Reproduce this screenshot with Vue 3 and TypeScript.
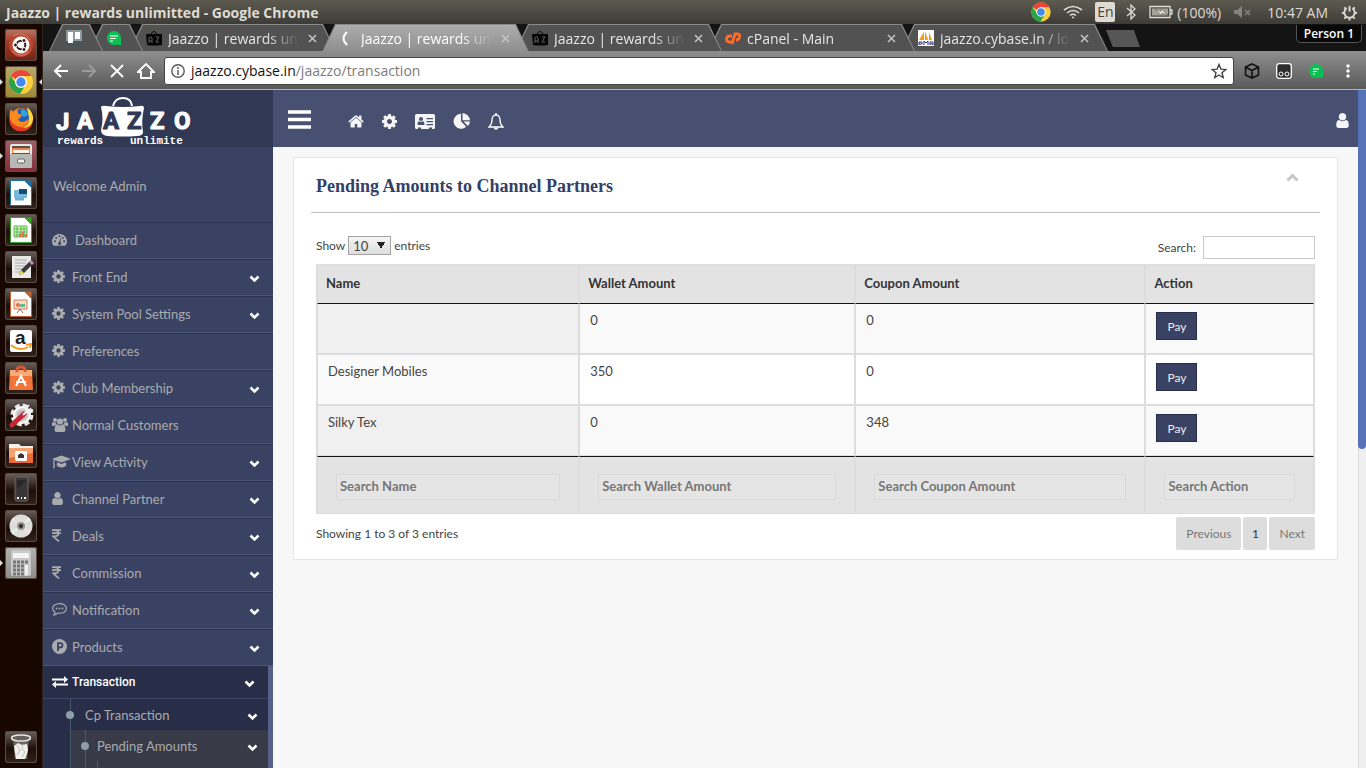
<script setup lang="ts">
import { ref, computed } from 'vue'

interface Tab { title: string; icon: string; pinned?: boolean; active?: boolean }
interface NavItem { label: string; icon: string; open?: boolean; wide?: boolean }
interface Partner { name: string; wallet: number; coupon: number }

const tabs: Tab[] = [
  { title: '', icon: 'board', pinned: true },
  { title: '', icon: 'chat', pinned: true },
  { title: 'Jaazzo | rewards unlimitted', icon: 'bag' },
  { title: 'Jaazzo | rewards unlimitted', icon: 'spin', active: true },
  { title: 'Jaazzo | rewards unlimitted', icon: 'bag' },
  { title: 'cPanel - Main', icon: 'cp' },
  { title: 'jaazzo.cybase.in / localhost', icon: 'pma' }
]

const nav: NavItem[] = [
  { label: 'Dashboard', icon: 'gauge', wide: true },
  { label: 'Front End', icon: 'cog', open: true },
  { label: 'System Pool Settings', icon: 'cog', open: true },
  { label: 'Preferences', icon: 'cog' },
  { label: 'Club Membership', icon: 'cog', open: true },
  { label: 'Normal Customers', icon: 'group' },
  { label: 'View Activity', icon: 'cap', open: true },
  { label: 'Channel Partner', icon: 'user', open: true },
  { label: 'Deals', icon: 'rupee', open: true },
  { label: 'Commission', icon: 'rupee', open: true },
  { label: 'Notification', icon: 'comment', open: true },
  { label: 'Products', icon: 'product', open: true }
]

const launchers = ['Ubuntu', 'Chrome', 'Firefox', 'Files', 'Writer', 'Calc', 'Editor', 'Impress', 'Amazon', 'Software', 'Settings', 'Pictures', 'Phone', 'Disc', 'Calculator', 'Trash']

const columns = ['Name', 'Wallet Amount', 'Coupon Amount', 'Action']
const partners: Partner[] = [
  { name: '', wallet: 0, coupon: 0 },
  { name: 'Designer Mobiles', wallet: 350, coupon: 0 },
  { name: 'Silky Tex', wallet: 0, coupon: 348 }
]
const query = ref('')
const size = ref('10')
const filters = ref(['', '', '', ''])
const rows = computed(() => partners.filter(p => {
  const cells = [p.name, String(p.wallet), String(p.coupon), 'Pay']
  const q = query.value.toLowerCase()
  return cells.some(c => c.toLowerCase().includes(q)) &&
    cells.every((c, i) => c.toLowerCase().includes(filters.value[i].toLowerCase()))
}))

const cog = 'M1152 896q0-106-75-181t-181-75-181 75-75 181 75 181 181 75 181-75 75-181zm512-109v222q0 12-8 23t-20 13l-185 28q-19 54-39 91 35 50 107 138 10 12 10 25t-9 23q-27 37-99 108t-94 71q-12 0-26-9l-138-108q-44 23-91 38-16 136-29 186-7 28-36 28h-222q-14 0-24.5-8.5t-11.5-21.5l-28-184q-49-16-90-37l-141 107q-10 9-25 9-14 0-25-11-126-114-165-168-7-10-7-23 0-12 8-23 15-21 51-66.5t54-70.5q-27-50-41-99l-183-27q-13-2-21-12.5t-8-23.5v-222q0-12 8-23t19-13l186-28q14-46 39-92-40-57-107-138-10-12-10-24 0-10 9-23 26-36 98.5-107.5t94.5-71.5q13 0 26 10l138 107q44-23 91-38 16-136 29-186 7-28 36-28h222q14 0 24.5 8.500t11.5 21.5l28 184q49 16 90 37l142-107q9-9 24-9 13 0 25 10 129 119 165 170 7 8 7 22 0 12-8 23-15 21-51 66.5t-54 70.5q26 50 41 98l183 28q13 2 21 12.5t8 23.5z'
const home = 'M1472 992v480q0 26-19 45t-45 19h-384v-384h-256v384h-384q-26 0-45-19t-19-45v-480q0-1 .5-3t.5-3l575-474 575 474q1 2 1 6zm223-69l-62 74q-8 9-21 11h-3q-13 0-21-7l-692-577-692 577q-12 8-24 7-13-2-21-11l-62-74q-8-10-7-23.5t11-21.5l719-599q32-26 76-26t76 26l244 204v-195q0-14 9-23t23-9h192q14 0 23 9t9 23v408l219 182q10 8 11 21.5t-7 23.5z'
const user = 'M1536 1399q0 109-62.5 187t-150.5 78h-854q-88 0-150.5-78t-62.5-187q0-85 8.5-160.5t31.5-152 58.5-131 94-89 134.5-34.5q131 128 313 128t313-128q76 0 134.5 34.5t94 89 58.5 131 31.5 152 8.5 160.5zm-256-887q0 159-112.5 271.5t-271.5 112.5-271.5-112.5-112.5-271.5 112.5-271.5 271.5-112.5 271.5 112.5 112.5 271.5z'
</script>

<template>
  <div class="desktop">
    <header class="panel">
      <span class="window-title">Jaazzo | rewards unlimitted - Google Chrome</span>
      <div class="tray">
        <svg class="t-chrome" viewBox="0 0 32 32" width="20" height="20"><circle cx="16" cy="16" r="15.500" fill="#fdd03b" /><path d="M16 16 2.600 8.200A15.500 15.500 0 0 1 29.500 8.500H16z" fill="#e8453c" /><path d="M2.600 8.200A15.500 15.500 0 0 0 15 31.500L22 20l-12-1z" fill="#2ba24c" /><circle cx="16" cy="16" r="7.500" fill="#fff" /><circle cx="16" cy="16" r="6" fill="#4688f1" /></svg>
        <svg class="t-wifi" viewBox="0 0 20 14" width="20" height="14" fill="none" stroke="#dfdbd2" stroke-width="1.600"><path d="M1 5q9-7 18 0M4 8q6-5 12 0M7 10.500q3-2.500 6 0" /><circle cx="10" cy="12.500" r="1" fill="#dfdbd2" stroke="none" /></svg>
        <span class="lang">En</span>
        <svg class="t-bt" viewBox="0 0 10 16" width="10" height="16" fill="none" stroke="#dfdbd2" stroke-width="1.300"><path d="m1 4 8 7-4 4V1l4 4-8 7" /></svg>
        <svg class="t-batt" viewBox="0 0 24 14" width="24" height="14"><path d="M1 1.500h20v11H1zM21 5h2v4h-2" fill="none" stroke="#dfdbd2" stroke-width="1.300" /><path d="M3 3.500h16v7H3z" fill="#a5a299" /><path d="m6 4 6 2.500V4l7 6-6-2v2.500z" fill="#f3f0e8" stroke="#4a4842" stroke-width=".5" /></svg>
        <span class="pct">(100%)</span>
        <svg class="t-mute" viewBox="0 0 18 12" width="18" height="12"><path d="M0 4h3l5-4v12L3 8H0z" fill="#86837a" /><path d="m11 4 5 5m0-5-5 5" stroke="#86837a" stroke-width="1.500" /></svg>
        <span class="clock">10:47 AM</span>
        <svg class="t-power" viewBox="0 0 18 18" width="17" height="17" fill="none" stroke="#dfdbd2"><path d="M6 4.500a5.500 5.500 0 1 0 6 0" stroke-width="2" /><path d="M9 2v6" stroke-width="2" /><path d="M3.500 3.500 5 5m9.500-1.500L13 5M1 9.500h2m12 0h2M3.500 15.500 5 14m9.500 1.500L13 14M9 15v2.500" stroke-width="2" /></svg>
      </div>
    </header>

    <div class="workspace">
      <nav class="launcher" aria-label="Launcher">
        <button v-for="name in launchers" :key="name" :aria-label="name" :class="['tile', name.toLowerCase()]">
          <svg v-if="name === 'Ubuntu'" viewBox="0 0 32 32"><circle cx="16" cy="16" r="12" fill="#bc4630" /><path d="M8 7Q18 1 25 11M7 22q9 8 17 1" stroke="#d98674" fill="none" /><circle cx="16" cy="16" r="8.500" fill="#fff" /><circle cx="16" cy="16" r="4.300" stroke="#3a1c18" stroke-width="2" fill="none" /><g fill="#3a1c18" stroke="#fff"><circle cx="10.500" cy="16" r="2" /><circle cx="19" cy="11.500" r="2" /><circle cx="19" cy="20.500" r="2" /></g></svg>
          <svg v-else-if="name === 'Chrome'" viewBox="0 0 32 32"><circle cx="16" cy="16" r="12" fill="#fdd03b" /><path d="M16 16 5.600 10A12 12 0 0 1 26.500 10H16z" fill="#e8453c" /><path d="M5.600 10A12 12 0 0 0 15 28l5.500-9-9-1z" fill="#2ba24c" /><circle cx="16" cy="16" r="6" fill="#fff" /><circle cx="16" cy="16" r="4.700" fill="#4688f1" /></svg>
          <svg v-else-if="name === 'Firefox'" viewBox="0 0 32 32"><circle cx="16" cy="16.500" r="11.500" fill="#f4762a" /><circle cx="17" cy="13" r="7.500" fill="#1f5fb4" /><path d="M17 6q5 1 6 6l-4 2q-5-3-2-8z" fill="#35a3dd" /><path d="M6 6q1 3 3 3l4-2q-1 3 1 4l3 1q-1 3-4 4 1 3 5 3 4-1 5-4 0 6-6 8-7 1-11-5-3-6 0-12z" fill="#fb8b1e" /><path d="M4.500 15q0 13 11.500 13.200Q27 28 28 17q-4 8-12 7.500Q7 23 4.500 15z" fill="#e33a26" /><path d="M22 4q7 6 6 13-2 8-10 8 7-3 6-10-1-6-2-11z" fill="#ffd83a" /></svg>
          <svg v-else-if="name === 'Files'" viewBox="0 0 32 32"><rect x="5" y="4" width="22" height="24" rx="2" fill="#e6e6e4" /><path d="M7 6h18v8H7z" fill="#59514b" /><path d="M7 8h18v5H7z" fill="#f08145" /><path d="M8 10h16v3H8z" fill="#fff4e7" /><path d="M5 14h22v12q0 2-2 2H7q-2 0-2-2z" fill="#b8b8b5" /><rect x="12.500" y="19" width="7" height="4" rx="1" fill="#eee" stroke="#666" /></svg>
          <svg v-else-if="name === 'Writer' || name === 'Calc' || name === 'Impress'" viewBox="0 0 32 32" :class="'doc ' + name.toLowerCase() + '-doc'"><path d="M5.500 3.500h14l7 7V28.500h-21z" fill="#fff" stroke="currentColor" /><path d="M19.500 3.500h7v7z" fill="currentColor" /><g v-if="name === 'Writer'"><path d="M9 13h13v8H9z" fill="#75bbdf" /><path d="M14 12h8v5h-8z" fill="#174d6e" /><path d="M10 22h9" stroke="#6bafd4" stroke-width="3" /></g><g v-else-if="name === 'Calc'"><path d="M9 12h13v11H9zM9 15h13M9 18h13M9 21h13M12 12v11M16 12v11M19 12v11" fill="#d8f6ca" stroke="#45a832" stroke-width=".8" /><path d="M15 23v-4m3 4v-5m3 5v-3" stroke="#e75d41" stroke-width="1.500" /></g><g v-else><path d="M9 12h13v9H9z" fill="#fbdccb" stroke="#d87b54" /><path d="M15 16h5v3h-5z" fill="#6cb895" /><circle cx="13" cy="17" r="2" fill="#e96d43" /><path d="m12 25 3-4 3 4" fill="none" stroke="#a75b3d" /></g></svg>
          <svg v-else-if="name === 'Editor'" viewBox="0 0 32 32"><path d="M7 5h19v22H7z" fill="#e9e9e7" /><path d="M10 9h12M10 12h11M10 15h12M10 18h8M10 21h7" stroke="#a9a9a7" /><path d="m14 24 2-5 9-9 3 3-9 9z" fill="#3a3a3b" /><path d="m14 24 2-5 3 3z" fill="#f0d84e" /><path d="m24 11 2-2 3 3-2 2z" fill="#c989b8" /></svg>
          <svg v-else-if="name === 'Amazon'" viewBox="0 0 32 32"><rect x="5" y="5" width="22" height="22" rx="2" fill="#fff" /><text x="10" y="19" font-family="Liberation Sans, sans-serif" font-weight="700" font-size="19" fill="#202020">a</text><path d="M6 20q9 7 17 2M21 20l5-1-1 4" stroke="#f49b1f" fill="none" stroke-width="2" /></svg>
          <svg v-else-if="name === 'Software'" viewBox="0 0 32 32"><path d="M5 8h22l1 20H4z" fill="#f17438" /><path d="M5 8h22v6H5z" fill="#f7ab75" /><path d="M12 10q-1-5 4-5t4 5" fill="none" stroke="#d95633" stroke-width="3" /><path d="m11 24 5-10 5 10M11 20h10" stroke="#fff" stroke-width="2" fill="none" /></svg>
          <svg v-else-if="name === 'Settings'" viewBox="0 0 32 32"><circle cx="17" cy="16" r="10" fill="none" stroke="#e5e5e5" stroke-width="3" stroke-dasharray="5 2.900" /><circle cx="17" cy="16" r="8" fill="#d6d6d6" stroke="#fff" stroke-width="2" /><circle cx="17" cy="16" r="5" fill="#bbb" /><path d="m7 26 12-11" stroke="#c82632" stroke-width="5" stroke-linecap="round" /><path d="m18 16 6-6m0-4-3 4 2 3 5-2" stroke="#f2f2f2" stroke-width="2" fill="none" /></svg>
          <svg v-else-if="name === 'Pictures'" viewBox="0 0 32 32"><path d="M4 8h10l2 2h12v8H4z" fill="#f6eee8" /><path d="M4 12h24v15H4z" fill="#ec6a34" /><path d="M4 12h24v5L4 22z" fill="#f3a26f" /><rect x="10" y="15" width="12" height="10" rx="1.500" fill="#fff" /><path d="M13 22v-3l3-2 3 2v3z" fill="#3c3431" /></svg>
          <svg v-else-if="name === 'Phone'" viewBox="0 0 32 32"><rect x="10" y="4" width="13" height="24" rx="2" fill="#3b3938" stroke="#6b6866" /><path d="M12 7h9v15h-9z" fill="#292726" /><path d="M12 16 21 8v14h-9z" fill="#383634" /><path d="M12 25h2m2 0h1m2 0h2" stroke="#fff" stroke-width="2" /></svg>
          <svg v-else-if="name === 'Disc'" viewBox="0 0 32 32"><circle cx="16" cy="16" r="11.500" fill="#deddda" /><path d="M16 16 6 11l2-3zM16 16l10 5-3 4z" fill="#eddee9" /><path d="m16 16 7-9 3 3zM16 16 8 25l-3-4z" fill="#e3eee5" /><circle cx="16" cy="16" r="4" fill="#98938e" /><circle cx="16" cy="16" r="2" fill="#302a27" /></svg>
          <svg v-else-if="name === 'Calculator'" viewBox="0 0 32 32"><rect x="6" y="3" width="20" height="26" rx="2" fill="#c9c9c9" /><path d="M8 6h16v5H8z" fill="#f5f5ef" /><path d="M8 15h3m1 0h3m1 0h3M8 19h3m1 0h3m1 0h3M8 23h3m1 0h3m1 0h3M8 27h3m1 0h3m1 0h3M20 15h3" stroke="#777" stroke-width="3" /><path d="M20 18h3v10h-3z" fill="#eee" /></svg>
          <svg v-else viewBox="0 0 32 32"><path d="m8 7 2 21h12l2-21z" fill="#6f6763" /><ellipse cx="16" cy="7" rx="9.500" ry="3" fill="#655f5d" stroke="#e8e7e5" stroke-width="1.500" /><path d="m9 15 4-3 4 2 5-1 1 6-1 4-2 5H11l-1-6z" fill="#f0efed" /><path d="m12 14 3 5-3 5m6-11-1 5 3 3-3 5" stroke="#c4c0bc" fill="none" /></svg>
        </button>
      </nav>

      <div class="browser">
        <div class="tabstrip">
          <div v-for="(tab, i) in tabs" :key="i" class="tab" :class="{ pinned: tab.pinned, active: tab.active }" :style="{ zIndex: tab.active ? 20 : 10 - i }">
            <svg viewBox="0 0 16 16" width="16" height="16" class="favicon">
              <g v-if="tab.icon === 'board'"><path d="M0 0h16v16H0z" fill="#8d9a9f" /><path d="M0 11h16v5H0z" fill="#46555b" /><path d="M2 2h5v11H2zm7 0h5v7H9z" fill="#fff" /></g>
              <g v-else-if="tab.icon === 'chat'"><path d="M8 1a7 7 0 1 0 2 13.700L15 15v-7A7 7 0 0 0 8 1z" fill="#0bbf53" /><path d="M4 6h8M4 8.500h6M4 11h3" stroke="#fff" /></g>
              <g v-else-if="tab.icon === 'bag'"><path d="M0 4h16v11q-8 1-15 0z" fill="#050505" /><path d="M5 4q3-5 6 0" fill="none" stroke="#050505" /><path d="M3 13V8q2-3 3 0v5M3 11h3M10 7h3l-3 5h3" fill="none" stroke="#626262" /></g>
              <path v-else-if="tab.icon === 'spin'" d="M8 2Q1 8 8 15" fill="none" stroke="#fff" stroke-width="2" />
              <g v-else-if="tab.icon === 'cp'" fill="none" stroke="#ff6c2c" stroke-width="2.800"><path d="M7 6H4.500Q1.500 6 1.500 9t3 3H6" /><path d="m7 14 3-10h3q2 0 1.500 3T11 10" /></g>
              <g v-else><path d="M0 0h16v16H0z" fill="#fff" /><path d="M1 10 6 2v8zm6 0V1l3 9zm4 0V2l3 8z" fill="#f89c0e" /><path d="M1 15v-3h3v2H1m5 1v-4l2 2 2-2v4m2 0v-3h3v3m-3-1h3" fill="none" stroke="#313175" /></g>
            </svg>
            <span v-if="!tab.pinned" class="tab-title">{{ tab.title }}</span>
            <button v-if="!tab.pinned" class="tab-close" aria-label="Close tab"><svg viewBox="0 0 9 9" width="9" height="9"><path d="m1 1 7 7m0-7-7 7" stroke="#c4c4c4" stroke-width="1.500" /></svg></button>
          </div>
          <button class="new-tab" aria-label="New tab"></button>
          <button class="person">Person 1</button>
        </div>

        <div class="toolbar">
          <button aria-label="Back"><svg viewBox="0 0 16 16" width="16" height="16"><path d="M15 8H2m6-6L2 8l6 6" fill="none" stroke="#fff" stroke-width="2" /></svg></button>
          <button aria-label="Forward"><svg viewBox="0 0 16 16" width="16" height="16"><path d="M1 8h13M8 2l6 6-6 6" fill="none" stroke="#9b9b9b" stroke-width="2" /></svg></button>
          <button aria-label="Stop"><svg viewBox="0 0 16 16" width="16" height="16"><path d="m2 2 12 12m0-12L2 14" stroke="#fff" stroke-width="1.800" /></svg></button>
          <button aria-label="Home"><svg viewBox="0 0 18 16" width="18" height="16"><path d="M1 9 9 1l8 8h-3v6H4V9z" fill="none" stroke="#fff" stroke-width="1.800" /></svg></button>
          <div class="omnibox">
            <svg viewBox="0 0 14 14" width="14" height="14"><circle cx="7" cy="7" r="6.200" fill="none" stroke="#5a5a5a" stroke-width="1.400" /><path d="M7 6v5M7 3v2" stroke="#5a5a5a" stroke-width="1.500" /></svg>
            <span class="url">jaazzo.cybase.in<i>/jaazzo/transaction</i></span>
            <svg viewBox="0 0 16 16" width="16" height="16"><path d="m8 1.500 1.900 4.600 4.900.4-3.800 3.200 1.200 4.900L8 12l-4.200 2.600L5 9.700 1.200 6.500l4.900-.4z" fill="none" stroke="#444" stroke-width="1.400" /></svg>
          </div>
          <div class="extensions">
            <svg viewBox="0 0 16 16" width="16" height="16"><path d="m8 1 6.500 3v8L8 15l-6.500-3V4zM1.500 4 8 7.500 14.500 4M8 7.500V15" fill="none" stroke="#111" stroke-width="1.600" /></svg>
            <svg viewBox="0 0 16 16" width="16" height="16"><rect x=".7" y=".7" width="14.600" height="14.600" rx="2.500" fill="#2c2c2c" stroke="#fff" stroke-width="1.300" /><circle cx="5" cy="11" r="2" fill="none" stroke="#fff" /><circle cx="11" cy="11" r="2" fill="none" stroke="#fff" /></svg>
            <svg viewBox="0 0 16 16" width="16" height="16"><path d="M8 1a7 7 0 1 0 2 13.700L15 14V8A7 7 0 0 0 8 1z" fill="#0bbf53" /><path d="M5 6h6M5 8.500h4M5 11h2" stroke="#fff" /></svg>
            <svg viewBox="0 0 16 16" width="16" height="16" fill="#fff"><circle cx="8" cy="3" r="1.700" /><circle cx="8" cy="8" r="1.700" /><circle cx="8" cy="13" r="1.700" /></svg>
          </div>
        </div>

        <div class="page">
          <aside class="sidebar">
            <div class="brand">
              <svg viewBox="0 0 230 57" width="230" height="57" role="img" aria-label="Jaazzo">
                <path d="M70 16Q72 8 80 8t9 8" fill="none" stroke="#fff" stroke-width="2" />
                <path d="M58 17q1-2 5-1 18 2 34 0 4-1 4 2-3 13-1 24 0 4-6 4-14 1-30 0-6-1-6-6 3-11 0-23z" fill="#fff" />
                <g font-family="Roboto, sans-serif" font-weight="700" font-size="24" fill="#fff" stroke="#fff" stroke-linejoin="round">
                  <text x="13" y="40">J</text><text x="34" y="39">A</text><text x="60" y="39" fill="#303854" stroke="#303854">A</text><text x="84" y="39" fill="#303854" stroke="#303854">Z</text><text x="107" y="39">Z</text><text x="131" y="39">O</text>
                </g>
                <g font-family="Liberation Mono, monospace" font-weight="700" font-size="11" fill="#fff"><text x="14" y="54">rewards</text><text x="87" y="54">unlimite</text></g>
              </svg>
            </div>
            <div class="welcome">Welcome Admin</div>
            <a v-for="item in nav" :key="item.label" href="#" class="nav-item">
              <span class="nav-icon" :class="{ wide: item.wide }">
                <svg v-if="item.icon === 'cog'" viewBox="128 128 1536 1536" width="13" height="13"><path :d="cog" /></svg>
                <svg v-else-if="item.icon === 'gauge'" viewBox="0 0 16 14" width="15" height="13"><path d="M8 1a8 8 0 0 0-6.700 12.300q.3.400.8.400h11.800q.5 0 .8-.4A8 8 0 0 0 8 1z" /><g fill="#3a4263"><circle cx="3" cy="9" r="1.100" /><circle cx="4.500" cy="5.300" r="1.100" /><circle cx="8" cy="3.600" r="1.100" /><circle cx="11.500" cy="5.300" r="1.100" /><circle cx="13" cy="9" r="1.100" /><path d="m8.700 6 .8.200L9 10a1.600 1.600 0 1 1-1.300-.2z" /></g></svg>
                <svg v-else-if="item.icon === 'group'" viewBox="0 0 16 15" width="16" height="15"><circle cx="3" cy="3" r="2" /><circle cx="13" cy="3" r="2" /><circle cx="8" cy="4.500" r="3.100" /><path d="M0 9V7q0-2 1-2 2 1 3 .5Q4 7 5 8q-2 0-3 1zM16 9V7q0-2-1-2-2 1-3 .5 0 1.500-1 2.500 2 0 3 1zM2.500 13q0-5 3-5.500 2.500 2 5 0 3 .5 3 5.500 0 2-2 2h-7q-2 0-2-2z" /></svg>
                <svg v-else-if="item.icon === 'cap'" viewBox="0 0 19 14" width="19" height="14"><path d="M9.500.5 19 4 9.500 7.500 3 5.200q-.8 1-.8 3l.7 1-.5 4H1l.5-4-.5-1q.1-2 .8-3.500L0 4zM5 7.300l4.500 1.600L14 7.300l.3 3Q13 12.500 9.500 12.500t-4.800-2.200z" /></svg>
                <svg v-else-if="item.icon === 'user'" viewBox="256 128 1280 1536" width="11" height="13"><path :d="user" /></svg>
                <svg v-else-if="item.icon === 'rupee'" viewBox="0 0 9 13" width="9" height="13"><path d="M0 1.200h9M0 4.200h9M2 1.200q4.500 0 4.500 3T2 7.300H1L7 12.500" fill="none" stroke="currentColor" stroke-width="1.700" /></svg>
                <svg v-else-if="item.icon === 'comment'" viewBox="0 0 15 13" width="15" height="13"><path d="M7.500.6C3.700.6.600 2.800.600 5.500c0 1.500 1 2.800 2.500 3.700q-.2 1.500-1.200 2.700 2.200-.2 3.700-1.800c6 .8 8.800-1.700 8.800-4.600S11.300.6 7.500.6z" fill="none" stroke="currentColor" stroke-width="1.200" /><circle cx="4.500" cy="5.500" r=".9" /><circle cx="7.500" cy="5.500" r=".9" /><circle cx="10.500" cy="5.500" r=".9" /></svg>
                <svg v-else viewBox="0 0 15 15" width="15" height="15"><circle cx="7.500" cy="7.500" r="7.500" /><path d="M6 12V4.200h2.300q2.200 0 2.200 2.100T8.300 8.500H6" fill="none" stroke="#3a4263" stroke-width="1.800" /></svg>
              </span>
              <span class="nav-label">{{ item.label }}</span>
              <svg v-if="item.open" class="chev" viewBox="0 0 11 8" width="11" height="8"><path d="m1.500 1.500 4 4 4-4" /></svg>
            </a>
            <div class="nav-open">
              <div class="open-body">
                <a href="#" class="open-head">
                  <svg viewBox="0 0 16 12" width="16" height="12"><path d="M0 3.500h12M16 8.500H4" stroke="#fff" stroke-width="2" /><path d="m12 0 4 3.500L12 7zM4 5 0 8.500 4 12z" fill="#fff" /></svg>
                  <span>Transaction</span>
                  <svg class="chev" viewBox="0 0 11 8" width="11" height="8"><path d="m1.500 1.500 4 4 4-4" /></svg>
                </a>
                <div class="branch">
                  <a href="#" class="branch-item"><span>Cp Transaction</span><svg class="chev" viewBox="0 0 11 8" width="11" height="8"><path d="m1.500 1.500 4 4 4-4" /></svg></a>
                  <div class="leafs">
                    <a href="#" class="branch-item inner"><span>Pending Amounts</span><svg class="chev" viewBox="0 0 11 8" width="11" height="8"><path d="m1.500 1.500 4 4 4-4" /></svg></a>
                    <div class="deeper"></div>
                  </div>
                </div>
              </div>
              <div class="open-scroll"></div>
            </div>
          </aside>

          <main class="main">
            <div class="topbar">
              <button class="menu" aria-label="Toggle menu"><svg viewBox="0 0 23 19" width="23" height="19"><path d="M0 2h23M0 9.500h23M0 17h23" stroke="#fff" stroke-width="3.600" /></svg></button>
              <a href="#" aria-label="Home"><svg viewBox="50 240 1690 1320" width="16" height="13"><path :d="home" /></svg></a>
              <a href="#" aria-label="Settings"><svg viewBox="128 128 1536 1536" width="15" height="15"><path :d="cog" /></svg></a>
              <a href="#" aria-label="Contacts"><svg viewBox="0 0 20 15" width="20" height="15"><rect width="20" height="15" rx="1.500" /><g fill="#475070"><circle cx="6" cy="5" r="2" /><path d="M2.500 11q0-3.500 1.800-3.700 1.700 1.200 3.400 0 1.800.2 1.800 3.700zM11.500 4H18v1.300h-6.500zM11.500 7H18v1.300h-6.500zM11.500 10H18v1.300h-6.500zM3 13.500h3V15H3zm11 0h3V15h-3z" /></g></svg></a>
              <a href="#" aria-label="Reports"><svg viewBox="0 0 17 16" width="17" height="16"><path d="M8 .8v7.500l5.200 5.500A7.500 7.500 0 1 1 8 .8z" /><path d="M9.500 0A8 8 0 0 1 17 7.300H9.500zM10.500 8.600H17q-.2 2.600-2 4.500z" /></svg></a>
              <a href="#" aria-label="Alerts"><svg viewBox="0 0 16 17" width="16" height="17"><path d="M8 2C5 2 4 4.500 4 7q0 4.500-3 7h14q-3-2.500-3-7c0-2.500-1-5-4-5z" fill="none" stroke="#fff" stroke-width="1.300" /><path d="M7.200 0h1.600v2H7.200zM5.700 14.500h4.600a2.300 2.300 0 0 1-4.600 0z" /></svg></a>
              <a href="#" aria-label="Account" class="account"><svg viewBox="256 128 1280 1536" width="13" height="15"><path :d="user" /></svg></a>
            </div>

            <section class="card">
              <div class="card-head">
                <h1>Pending Amounts to Channel Partners</h1>
                <button aria-label="Collapse"><svg viewBox="0 0 13 9" width="13" height="9"><path d="m1.500 7.500 5-5 5 5" fill="none" stroke="#c5c7cc" stroke-width="3" /></svg></button>
              </div>
              <div class="card-body">
                <div class="controls">
                  <label class="length">Show <select v-model="size"><option>10</option><option>25</option><option>50</option></select> entries</label>
                  <label class="search">Search: <input v-model="query" type="search"></label>
                </div>
                <table>
                  <colgroup><col class="c1"><col class="c2"><col class="c3"><col class="c4"></colgroup>
                  <thead><tr><th v-for="c in columns" :key="c">{{ c }}</th></tr></thead>
                  <tbody>
                    <tr v-for="(p, i) in rows" :key="i"><td>{{ p.name }}</td><td>{{ p.wallet }}</td><td>{{ p.coupon }}</td><td><button class="pay">Pay</button></td></tr>
                  </tbody>
                  <tfoot><tr><th v-for="(c, i) in columns" :key="c"><input v-model="filters[i]" type="text" :placeholder="'Search ' + c" :aria-label="'Search ' + c"></th></tr></tfoot>
                </table>
                <div class="footer">
                  <span>Showing 1 to 3 of 3 entries</span>
                  <div class="pager"><button>Previous</button><button class="current">1</button><button>Next</button></div>
                </div>
              </div>
            </section>
          </main>
          <div class="scrollbar"><div class="thumb"></div></div>
        </div>
      </div>
    </div>
  </div>
</template>

<style>
body { margin: 0; overflow: hidden; }
</style>

<style scoped>
* { box-sizing: border-box; }
button { padding: 0; border: 0; background: none; font: inherit; color: inherit; }
a { color: inherit; text-decoration: none; }
svg { display: block; flex: none; }
.desktop { height: 100vh; display: flex; flex-direction: column; font-family: Lato, sans-serif; font-size: 13px; color: #444; }

.panel { flex: none; height: 24px; padding: 0 8px 0 6px; display: flex; align-items: center; justify-content: space-between; background: linear-gradient(#5d5b50, #3d3b37); font-family: "Open Sans", sans-serif; font-size: 14px; color: #dfdbd2; }
.window-title { font-weight: 700; white-space: nowrap; }
.tray { display: flex; align-items: center; }
.t-wifi { margin-left: 12px; }
.lang { margin-left: 12px; width: 20px; height: 20px; border-radius: 2px; background: #dfdbd2; color: #45433e; text-align: center; line-height: 20px; }
.t-bt { margin-left: 11px; }
.t-batt { margin-left: 13px; }
.pct { margin-left: 4px; }
.t-mute { margin-left: 13px; }
.clock { margin-left: 15px; }
.t-power { margin-left: 13px; }

.workspace { flex: 1; min-height: 0; display: flex; }
.launcher { flex: none; width: 43px; padding: 5px 6px 5px 5px; display: flex; flex-direction: column; gap: 5px; background: #170700; border-right: 1px solid #30241e; }
.tile { position: relative; flex: none; width: 32px; height: 32px; border-radius: 3px; background: linear-gradient(#6b625d, #2b1d17 45%, #1c0e08 55%, #33241d); box-shadow: inset 0 0 0 1px #584c46; }
.tile svg { width: 32px; height: 32px; }
.tile.ubuntu { background: linear-gradient(#b87766, #a33c28 40%, #6e2415); }
.tile.chrome { background: linear-gradient(#b7a76b, #9d8a37); }
.tile.files { background: linear-gradient(#a36169, #822b38); }
.tile.calculator { background: linear-gradient(#b0b0ae, #8d8d8b); }
.tile.trash { margin-top: auto; }
.chrome::before, .files::before, .calculator::before { content: ""; position: absolute; left: -5px; top: 13px; border: 3px solid transparent; border-left-color: #ddd; border-right: 0; }
.chrome::after { content: ""; position: absolute; right: -5px; top: 13px; border: 3px solid transparent; border-right-color: #ddd; border-left: 0; }
.writer-doc { color: #1a73a8; }
.calc-doc { color: #35a126; }
.impress-doc { color: #c3602f; }

.browser { flex: 1; min-width: 0; display: flex; flex-direction: column; }
.tabstrip { flex: none; height: 28px; padding: 0 2px 0 20px; display: flex; align-items: flex-end; background: #141414; border-bottom: 1px solid #8b8b8b; font-family: "Open Sans", sans-serif; font-size: 14px; color: #e6e6e6; }
.tab { position: relative; flex: none; width: 207px; height: 27px; margin-left: -14px; padding: 1px 17px 0; display: flex; align-items: center; background: #8a8a8a; clip-path: polygon(13px 0, calc(100% - 13px) 0, 100% 100%, 0 100%); }
.tab::before { content: ""; position: absolute; inset: 1px 1px 0; background: #525252; clip-path: polygon(13px 0, calc(100% - 13px) 0, 100% 100%, 0 100%); }
.tab.pinned { width: 54px; }
.tab.active { height: 28px; margin-bottom: -1px; padding-top: 0; color: #fff; }
.tab.active::before { background: linear-gradient(#adadad, #8e8e8e); }
.favicon { position: relative; }
.tab-title { position: relative; flex: 1; margin-left: 6px; white-space: nowrap; overflow: hidden; mask-image: linear-gradient(90deg, #000 75%, transparent); }
.tab-close { position: relative; width: 20px; display: flex; justify-content: flex-end; }
.tab-close svg { margin-right: 2px; }
.new-tab { width: 34px; height: 17px; margin: 0 0 4px -2px; background: #565656; clip-path: polygon(0 0, 82% 0, 100% 100%, 20% 100%); }
.person { align-self: flex-start; height: 18px; margin: 1px 2px 0 auto; padding: 0 7px; border: 1px solid #555; border-top: 0; border-radius: 0 0 5px 5px; background: #080808; font-size: 12px; line-height: 16px; font-weight: 600; color: #fff; }
.toolbar { flex: none; height: 38px; padding: 0 10px; display: flex; align-items: center; gap: 12px; background: linear-gradient(#8e8e8e, #595959); border-bottom: 1px solid #b4b4b4; }
.omnibox { flex: 1; height: 28px; margin: 0 -2px 0 -3px; padding: 0 6px; display: flex; align-items: center; gap: 6px; background: #fff; border: 1px solid #444; border-radius: 3px; font-family: "Open Sans", sans-serif; font-size: 14px; color: #111; }
.url { flex: 1; }
.url i { font-style: normal; color: #7c7c7c; }
.extensions { display: flex; gap: 16px; }

.page { flex: 1; min-height: 0; display: flex; background: #f7f7f7; }
.sidebar { flex: none; width: 230px; display: flex; flex-direction: column; overflow: hidden; background: #3a4263; color: #aaabad; font-size: 13px; }
.brand { flex: none; height: 57px; background: #303854; }
.welcome { flex: none; height: 75px; padding: 3px 10px 0; display: flex; align-items: center; line-height: 18px; }
.nav-item { flex: none; height: 37px; padding: 0 13px 2px 9px; display: flex; align-items: center; border-top: 1px solid #2c3350; border-bottom: 1px solid #4b5578; }
.nav-icon { flex: none; width: 20px; }
.nav-icon.wide { width: 23px; }
.nav-icon svg { fill: currentColor; }
.nav-label { flex: 1; white-space: nowrap; }
.chev { margin-left: auto; margin-top: 4px; fill: none; stroke: #fff; stroke-width: 2.6; }
.nav-open { flex: 1; display: flex; background: #282e48; }
.open-body { flex: 1; display: flex; flex-direction: column; }
.open-scroll { width: 5px; background: #566088; }
.open-head { flex: none; height: 33px; padding: 0 13px 0 9px; display: flex; align-items: center; gap: 4px; border-bottom: 1px solid #3b4568; color: #fff; font-family: Roboto, sans-serif; font-size: 12px; font-weight: 500; }
.branch { flex: 1; margin-left: 27px; display: flex; flex-direction: column; border-left: 1px solid #45596a; }
.branch-item { position: relative; flex: none; height: 31px; padding: 0 10px 0 14px; display: flex; align-items: center; }
.branch-item::before { content: ""; position: absolute; left: -5px; width: 8px; height: 8px; border-radius: 50%; background: #8d9ea8; }
.leafs { flex: 1; padding-left: 14px; display: flex; flex-direction: column; background: #383a48; }
.inner { padding-left: 11px; border-left: 1px solid #45596a; }
.deeper { flex: 1; padding-left: 11px; border-left: 1px solid #45596a; }
.deeper::before { content: ""; display: block; height: 100%; border-left: 1px solid #45596a; }

.main { flex: 1; min-width: 0; }
.topbar { height: 57px; padding: 1px 9px 0 15px; display: flex; align-items: center; gap: 18px; background: #475070; fill: #f5f5f5; }
.topbar a { padding-top: 4px; }
.menu { margin-right: 19px; }
.topbar .account { margin-left: auto; padding-top: 2px; }
.card { margin: 10px 20px; background: #fff; border: 1px solid #e6e6e6; padding: 0 17px 9px; }
.card-head { height: 55px; padding: 0 21px 0 5px; display: flex; justify-content: space-between; border-bottom: 1px solid #bdbfc6; }
h1 { margin: 18px 0 0; font: 700 18px/21px "Liberation Serif", serif; color: #334066; }
.card-head button { height: 9px; margin-top: 15px; }
.card-body { padding: 23px 5px 0; }
.controls { display: flex; justify-content: space-between; align-items: flex-start; height: 28px; font-size: 12px; }
.length { display: flex; align-items: center; gap: 3px; height: 19px; }
select { width: 43px; height: 19px; padding: 0 4px; border: 1px solid #a3a3a3; border-radius: 0; background: conic-gradient(from -30deg at 50% 100%, #222 60deg, transparent 0) right 5px top 5px / 8px 7px no-repeat, linear-gradient(#f5f5f5, #dedede); font: inherit; font-size: 13px; color: #444; appearance: none; }
.search { display: flex; align-items: center; gap: 7px; }
.search input { width: 112px; height: 23px; border: 1px solid #c8c8c8; padding: 0 4px; font: inherit; appearance: none; }
table { width: 100%; table-layout: fixed; border: 1px solid #ddd; border-spacing: 0; }
.c1 { width: 26.3%; }
.c2 { width: 27.7%; }
.c3 { width: 29.1%; }
th, td { border: 0 solid #ddd; border-width: 0 1px; padding: 0 8px; text-align: left; }
th { background: #e3e3e3; color: #333; font-weight: 700; }
thead th { height: 39px; padding-bottom: 2px; border-bottom: 1px solid #111; }
td { height: 51px; padding: 8px 10px 0; vertical-align: top; border-width: 1px; line-height: 17px; background: #fff; }
td:first-child { background: #fafafa; }
tbody tr:nth-child(odd) td { background: #f9f9f9; }
tbody tr:nth-child(odd) td:first-child { background: #f0f0f0; }
tbody tr:first-child td { border-top: 0; height: 50px; }
tfoot th { padding: 17px 18px 13px; border-top: 1px solid #111; }
tfoot input { display: block; width: 100%; height: 26px; padding: 0 3px 2px; border: 1px solid #dadada; background: #e5e5e5; font: inherit; color: #555; }
tfoot input::placeholder { color: #777; opacity: 1; }
.pay { display: block; width: 41px; height: 28px; background: #3a4263; border: 1px solid #272e49; color: #eee; font-size: 12px; }
.footer { padding-top: 3px; display: flex; align-items: center; justify-content: space-between; font-size: 12px; }
.pager { display: flex; gap: 2px; color: #777; }
.pager button { height: 33px; padding: 0 10px; border-radius: 2px; background: #ddd; }
.pager .current { width: 24px; padding: 0; color: #333; }
.scrollbar { flex: none; width: 8px; background: #efefef; border-left: 1px solid #ddd; }
.thumb { height: 53%; margin-left: -1px; border-radius: 0 0 4px 4px; background: #5673b7; }
</style>
